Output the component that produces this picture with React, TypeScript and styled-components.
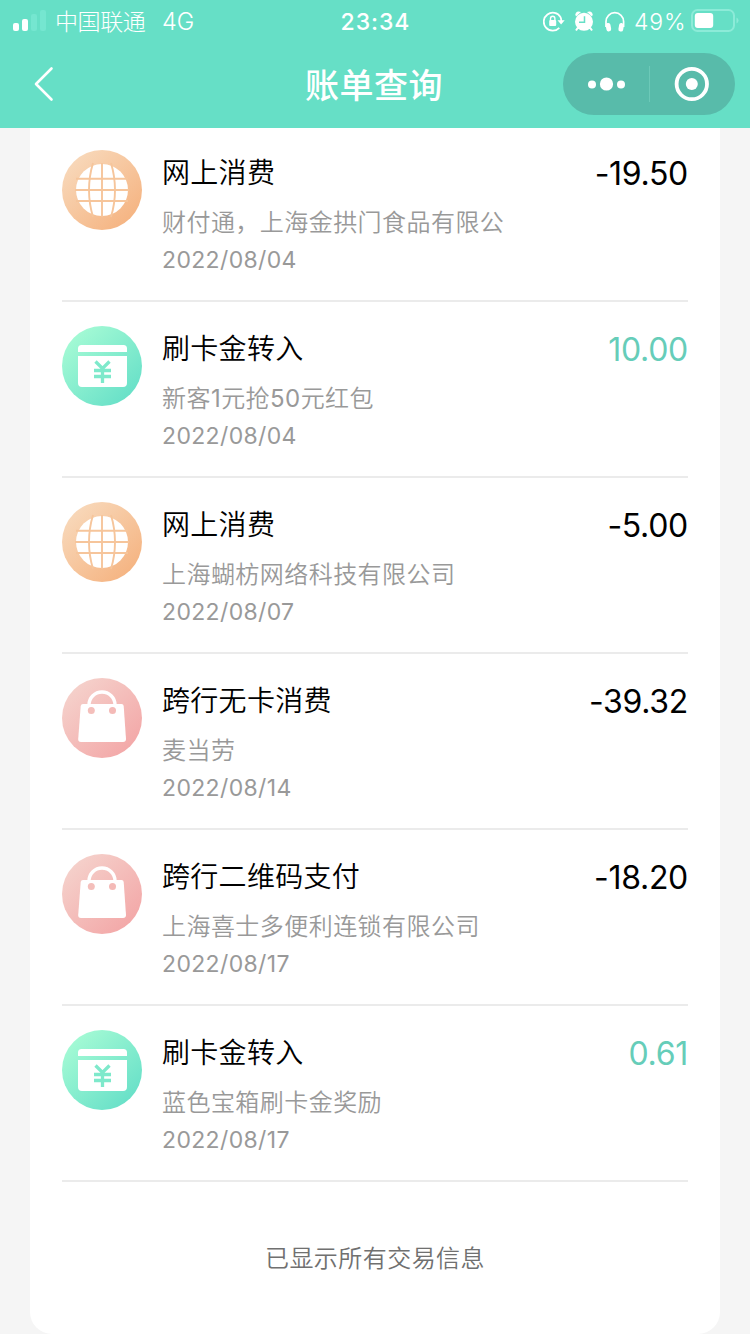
import React from "react";
import styled, { createGlobalStyle } from "styled-components";

const GlobalStyle = createGlobalStyle`
  * { box-sizing: border-box; }
  body {
    margin: 0;
    background: #f5f5f5;
    font-family: Inter, "Noto Sans CJK SC", sans-serif;
  }
`;

const Page = styled.div`
  display: flex;
  flex-direction: column;
  width: 750px;
  height: 1334px;
  overflow: hidden;
  background: #f5f5f5;
`;

const Header = styled.header`
  flex: none;
  height: 128px;
  background: #66dfc6;
  color: #fff;
`;

const StatusBar = styled.div`
  display: grid;
  grid-template-columns: 1fr auto 1fr;
  align-items: center;
  height: 40px;
  padding: 0 11px 0 13px;
  font-size: 23px;
  line-height: 40px;
`;

const StatusLeft = styled.div`
  display: flex;
  align-items: center;
  font-weight: 300;
`;

const Carrier = styled.span`
  margin-left: 8px;
  padding-top: 2px;
  letter-spacing: -0.4px;
`;

const Network = styled.span`
  margin-left: 16.5px;
  padding-top: 2px;
  font-size: 23.5px;
`;

const Clock = styled.div`
  margin-left: -1px;
  padding-top: 2px;
  font-weight: 500;
  letter-spacing: 0.95px;
`;

const StatusRight = styled.div`
  display: flex;
  align-items: center;
  justify-content: flex-end;
`;

const Battery = styled.span`
  width: 54px;
  margin: 0 3px 0 7.5px;
  padding-top: 2px;
  font-weight: 300;
  letter-spacing: 0.9px;
`;

const NavBar = styled.div`
  display: grid;
  grid-template-columns: 1fr auto 1fr;
  align-items: center;
  height: 88px;
  padding: 0 15px 0 33px;
`;

const BackButton = styled.button`
  display: flex;
  padding: 0;
  border: 0;
  background: none;
`;

const Title = styled.h1`
  margin: 4px 20px 0 0;
  font-size: 34px;
  line-height: 48px;
  font-weight: 500;
  letter-spacing: 0.5px;
`;

const Capsule = styled.div`
  display: flex;
  align-items: center;
  justify-self: end;
  width: 172px;
  height: 62px;
  border-radius: 31px;
  background: #58bbaa;
`;

const CapsuleHalf = styled.div`
  display: flex;
  flex: 1;
  align-items: center;
  justify-content: center;
`;

const CapsuleDivider = styled.div`
  width: 1px;
  height: 36px;
  background: #6cc9b8;
`;

const Card = styled.main`
  flex: none;
  height: 1206px;
  margin: 0 30px;
  padding: 0 32px;
  border-radius: 0 0 22px 22px;
  background: #fff;
`;

const Row = styled.article`
  display: flex;
  height: 176px;
  padding-top: 24px;
  border-bottom: 2px solid #ebebeb;

  &:first-child {
    height: 174px;
    padding-top: 22px;
  }
`;

const RowIcon = styled.svg`
  flex: none;
  width: 80px;
  height: 80px;
`;

const Info = styled.div`
  flex: 1;
  margin-left: 20px;
`;

const Name = styled.div`
  height: 44px;
  padding-top: 1px;
  font-size: 28px;
  line-height: 44px;
  font-weight: 350;
  letter-spacing: 0.3px;
  color: #000;
`;

const Desc = styled.div`
  height: 38px;
  margin-top: 10px;
  font-size: 24px;
  line-height: 38px;
  font-weight: 350;
  letter-spacing: 0.45px;
  color: #999;
`;

const Digits = styled.span`
  font-weight: 400;
`;

const DateText = styled.div`
  height: 38px;
  margin-top: -1px;
  font-size: 23px;
  line-height: 38px;
  letter-spacing: 0.35px;
  color: #999;
`;

const Amount = styled.div<{ $income: boolean }>`
  height: 46px;
  padding-top: 1px;
  font-size: 32px;
  line-height: 46px;
  letter-spacing: -0.3px;
  color: ${(p) => (p.$income ? "#66cdb9" : "#000")};
`;

const EndNote = styled.p`
  margin: 59px 0 0;
  text-align: center;
  font-size: 24px;
  line-height: 36px;
  font-weight: 350;
  letter-spacing: 0.45px;
  color: #707070;
`;

type Kind = "web" | "cash" | "shop";

const gradients: Record<Kind, [string, string]> = {
  web: ["#f8d9bb", "#f5b482"],
  cash: ["#a6fbd5", "#68e0c8"],
  shop: ["#f5d2cc", "#f3a8a8"],
};

const glyphs: Record<Kind, React.ReactNode> = {
  web: (
    <>
      <circle cx="40" cy="40" r="26" fill="#fff" />
      <g fill="none" stroke="#f6c59b" strokeWidth="1.900">
        <path d="M40 13v54M13 40h54M14 28.700h52M14 51h52" />
        <path d="M31 13q-8 27 0 54M49 13q8 27 0 54" />
      </g>
    </>
  ),
  cash: (
    <>
      <path d="M16 26v-3.500q0-3.500 3.500-3.500h42q3.500 0 3.500 3.500V26zM16 30h49v27q0 4-4 4H20q-4 0-4-4z" fill="#fff" />
      <path d="M33.500 35.500l7 7 7-7M40.500 42v15M32 44.500h17M32 50.500h17" fill="none" stroke="#7ee9cb" strokeWidth="3.300" />
    </>
  ),
  shop: (
    <>
      <path d="M27 27A13 13 0 0 1 53 27" fill="none" stroke="#fff" strokeWidth="3.400" />
      <path d="M21 26h38.500q2 0 2.200 2L64 61q0 3-3 3H19q-3 0-2.800-3l2.500-33q.3-2 2.300-2z" fill="#fff" />
      <circle cx="29.300" cy="32.500" r="3.500" fill="#f4bfbb" />
      <circle cx="50.500" cy="32.500" r="3.500" fill="#f4bab7" />
    </>
  ),
};

function TransactionIcon({ kind }: { kind: Kind }) {
  const id = React.useId();
  const [from, to] = gradients[kind];
  return (
    <RowIcon viewBox="0 0 80 80" aria-hidden>
      <defs>
        <linearGradient id={id} x1="0.1" y1="0.1" x2="0.85" y2="0.9">
          <stop stopColor={from} />
          <stop offset="1" stopColor={to} />
        </linearGradient>
      </defs>
      <circle cx="40" cy="40" r="40" fill={`url(#${id})`} />
      {glyphs[kind]}
    </RowIcon>
  );
}

function SignalIcon() {
  return (
    <svg width="34" height="24" viewBox="0 0 34 24" fill="#fff">
      <rect x="0" y="14" width="6" height="8" rx="2" />
      <rect x="9" y="10" width="6" height="12" rx="2" />
      <rect x="18" y="5" width="6" height="17" rx="2" fill="#75e6d0" />
      <rect x="27" y="1" width="6" height="21" rx="2" fill="#75e6d0" />
    </svg>
  );
}

function StatusIcons() {
  return (
    <svg width="84" height="24" viewBox="0 0 84 24" fill="none" stroke="#fff">
      <path d="M17.500 8.100A9 9 0 1 0 16.300 18.900M17.500 8.100q.8 1.600.8 4" strokeWidth="1.800" />
      <path d="M14.500 11.200h7.200l-3.600 4.300z" fill="#fff" stroke="none" />
      <rect x="6.200" y="11" width="7" height="6" rx="1" fill="#fff" stroke="none" />
      <path d="M7.500 11V9.500a2.200 2.200 0 0 1 4.400 0V11" strokeWidth="1.400" />
      <circle cx="41" cy="12.800" r="9" fill="#fff" stroke="none" />
      <path d="M33 7.500l5-4.500q-3.500-1.500-5 .8-1.500 1.800 0 3.700M49 7.500L44 3q3.500-1.500 5 .8 1.500 1.800 0 3.700" fill="#fff" stroke="none" />
      <path d="M35 18.500l-2 3M47 18.500l2 3" strokeWidth="2" />
      <path d="M41.500 7.300v6h-5.500" stroke="#66dfc6" strokeWidth="1.500" />
      <path d="M63 18v-5.500a8.800 8.800 0 0 1 17.600 0V18" strokeWidth="1.700" />
      <rect x="63" y="14" width="4.800" height="8.500" rx="2.200" fill="#fff" stroke="none" transform="rotate(-10 65 18)" />
      <rect x="75.800" y="14" width="4.800" height="8.500" rx="2.200" fill="#fff" stroke="none" transform="rotate(10 78 18)" />
    </svg>
  );
}

function BatteryIcon() {
  return (
    <svg width="48" height="24" viewBox="0 0 48 24">
      <rect x="1" y="1" width="42" height="21" rx="5.500" fill="none" stroke="#8cebd8" strokeWidth="2" />
      <rect x="3.800" y="4" width="18.400" height="15" rx="3" fill="#fff" />
      <path d="M45.500 8.500q2 .8 2 3t-2 3z" fill="#8cebd8" />
    </svg>
  );
}

const transactions: { kind: Kind; name: string; desc: string; date: string; amount: string }[] = [
  { kind: "web", name: "网上消费", desc: "财付通，上海金拱门食品有限公", date: "2022/08/04", amount: "-19.50" },
  { kind: "cash", name: "刷卡金转入", desc: "新客1元抢50元红包", date: "2022/08/04", amount: "10.00" },
  { kind: "web", name: "网上消费", desc: "上海蝴枋网络科技有限公司", date: "2022/08/07", amount: "-5.00" },
  { kind: "shop", name: "跨行无卡消费", desc: "麦当劳", date: "2022/08/14", amount: "-39.32" },
  { kind: "shop", name: "跨行二维码支付", desc: "上海喜士多便利连锁有限公司", date: "2022/08/17", amount: "-18.20" },
  { kind: "cash", name: "刷卡金转入", desc: "蓝色宝箱刷卡金奖励", date: "2022/08/17", amount: "0.61" },
];

// Digits take the regular weight so they keep pace with the lighter Chinese text.
function withDigits(text: string) {
  return text.split(/(\d+)/).map((part, i) => (i % 2 ? <Digits key={i}>{part}</Digits> : part));
}

export default function App() {
  return (
    <Page>
      <GlobalStyle />
      <Header>
        <StatusBar>
          <StatusLeft>
            <SignalIcon />
            <Carrier>中国联通</Carrier>
            <Network>4G</Network>
          </StatusLeft>
          <Clock>23:34</Clock>
          <StatusRight>
            <StatusIcons />
            <Battery>49%</Battery>
            <BatteryIcon />
          </StatusRight>
        </StatusBar>
        <NavBar>
          <BackButton aria-label="返回">
            <svg width="22" height="36" viewBox="0 0 22 36" fill="none" stroke="#fff" strokeWidth="2.600" strokeLinecap="round" strokeLinejoin="round">
              <path d="M18.500 2.500L3 18l15.500 15.500" />
            </svg>
          </BackButton>
          <Title>账单查询</Title>
          <Capsule>
            <CapsuleHalf>
              <svg width="38" height="14" viewBox="0 0 38 14" fill="#fff">
                <circle cx="5" cy="7.500" r="4" />
                <circle cx="19.500" cy="7" r="6.600" />
                <circle cx="34" cy="7.500" r="4" />
              </svg>
            </CapsuleHalf>
            <CapsuleDivider />
            <CapsuleHalf>
              <svg width="36" height="36" viewBox="0 0 36 36">
                <circle cx="17.800" cy="18" r="15.200" fill="none" stroke="#fff" strokeWidth="3.800" />
                <circle cx="17.800" cy="18" r="6" fill="#fff" />
              </svg>
            </CapsuleHalf>
          </Capsule>
        </NavBar>
      </Header>
      <Card>
        {transactions.map((t, i) => (
          <Row key={i}>
            <TransactionIcon kind={t.kind} />
            <Info>
              <Name>{t.name}</Name>
              <Desc>{withDigits(t.desc)}</Desc>
              <DateText>{t.date}</DateText>
            </Info>
            <Amount $income={!t.amount.startsWith("-")}>{t.amount}</Amount>
          </Row>
        ))}
        <EndNote>已显示所有交易信息</EndNote>
      </Card>
    </Page>
  );
}
